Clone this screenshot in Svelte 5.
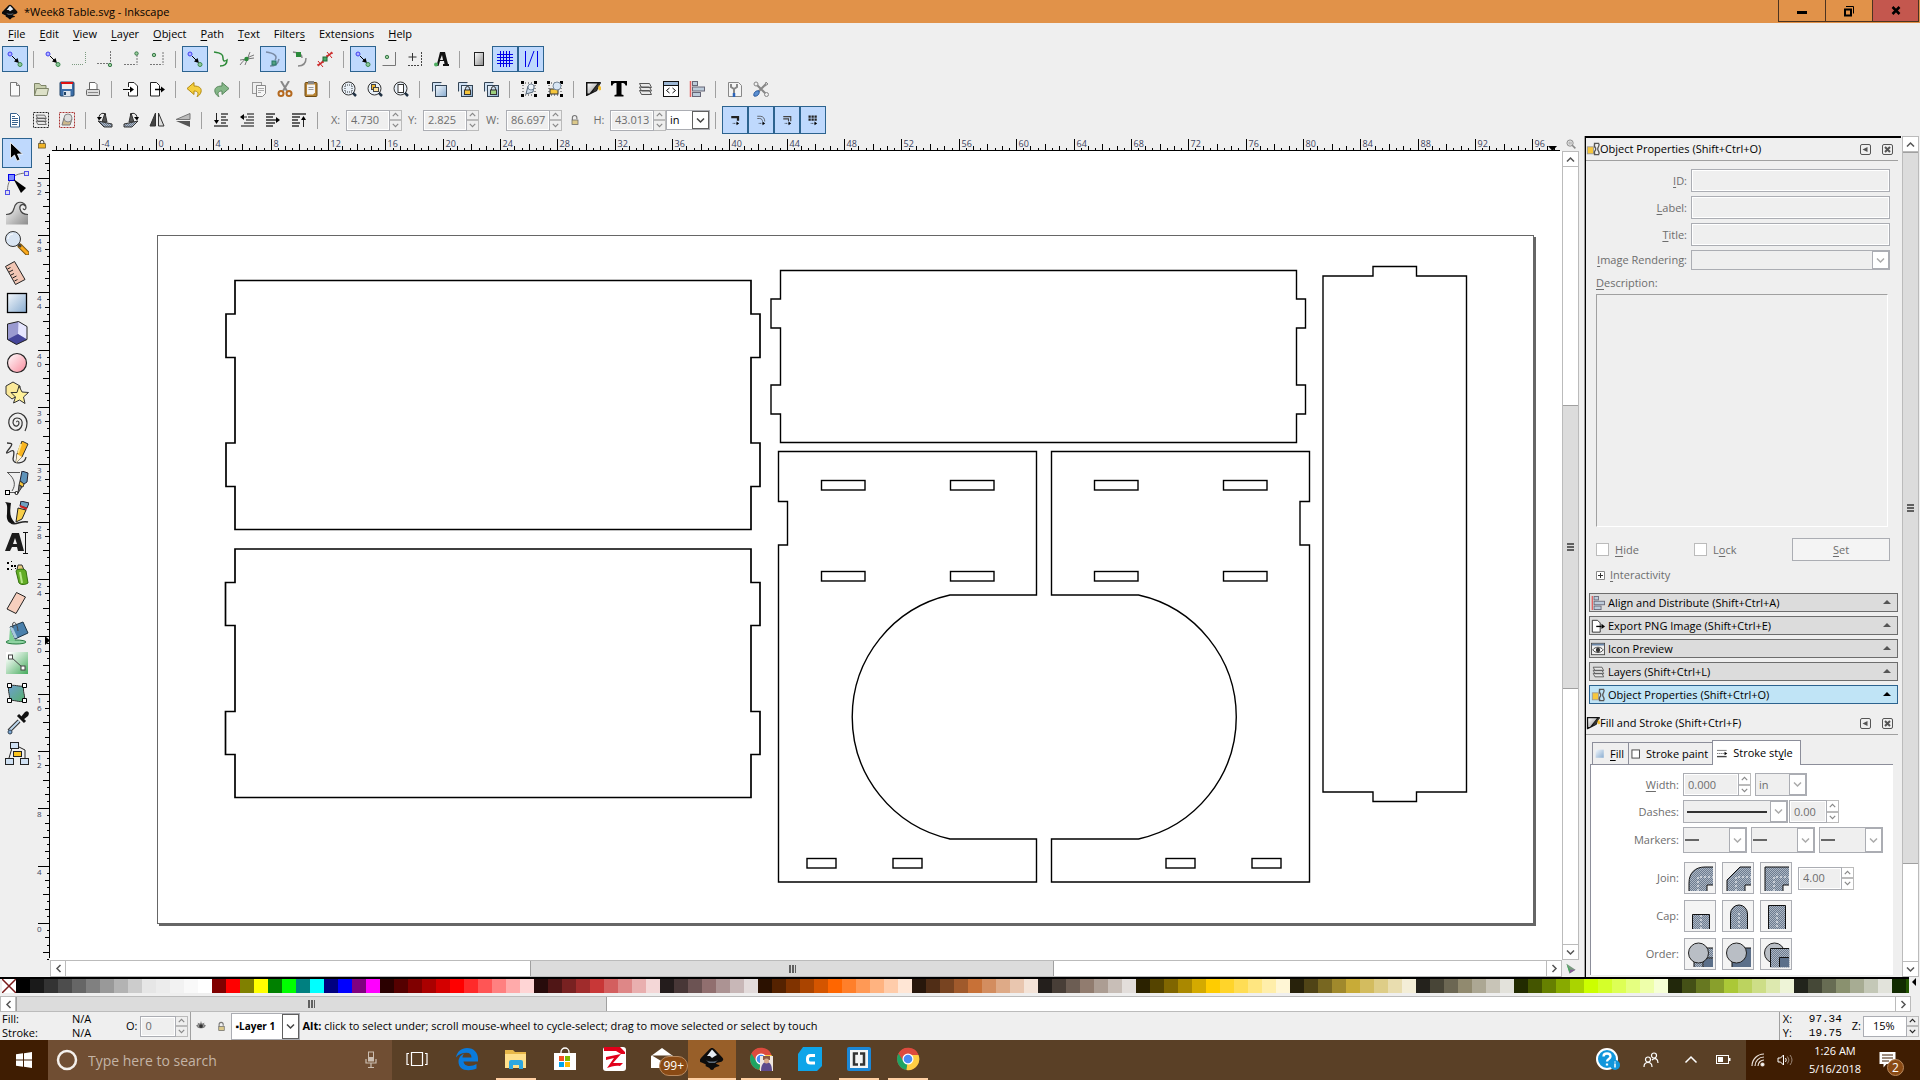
<script lang="ts">
  type Tick = { pos: number; size: number; label: string };

  const UNIT = 14.336;
  const PAGE_LEFT = 107;
  const PAGE_BOTTOM = 772;

  const menus = ['_File', '_Edit', '_View', '_Layer', '_Object', '_Path', '_Text', 'Filter_s', 'Exte_nsions', '_Help'];

  const node = '<circle cx="3" cy="3" r="2" fill="#b0b0ff" stroke="#4040f0"/><path d="M5 5l5 5" stroke="#000"/><path d="M12 12l-5-1.500 3.500-3.500z"/><circle cx="13" cy="13.500" r="2" fill="#8fc79b" stroke="#3a8a4c"/>';
  const dot = (x: number, y: number) => `<circle cx="${x}" cy="${y}" r="1.700" fill="#9c9" stroke="#3a7a4c"/>`;
  const pagePath = '<path d="M3.500 1.500h6l3 3v10.500h-9z" fill="#fafafa" stroke="#777"/><path d="M9.500 1.500v3h3" fill="#ddd" stroke="#777"/>';
  const lens = '<circle cx="7.500" cy="7.500" r="6.500" fill="#e8f0f8" stroke="#333"/><path d="M12 12l3 3" stroke="#234" stroke-width="2.500"/>';
  const padlock = (x: number, y: number, c = '#f6c63c') =>
    `<path d="M${x + 1.5} ${y + 3}v-1.500a2 2 0 0 1 4 0v1.500" fill="none" stroke="#333"/><rect x="${x + 0.5}" y="${y + 3}" width="6" height="4.500" fill="${c}" stroke="#333"/>`;
  const layered = '<path d="M1.500 10.500v-9h9" fill="none" stroke="#345"/><path d="M2 2h8v3h-5v5h-3z" fill="#cfe0f2"/><rect x="4.500" y="4.500" width="11" height="11" fill="url(#blueFill)" stroke="#345"/>';
  const layers = '<path d="M2.500 9.500l2 4h10l-2-4zM2.500 6l2 4h10l-2-4zM2.500 2.500l2 4h10l-2-4z" fill="#e8e8e8" stroke="#555"/>';
  const handles = '<path d="M0 0h3v3h-3zM13 0h3v3h-3zM0 13h3v3h-3zM13 13h3v3h-3z"/><path d="M4 2h8M2 4v8M14 4v8M4 14h8" stroke="#333" stroke-dasharray="1 2"/>';
  const scaleEnd = '<path d="M5 12.500h7" stroke="#000" stroke-dasharray="1 1"/><path d="M10 10l3.500 2.500-3.500 2.500z"/>';

  const icons: Record<string, string> = {
    node,
    bbox: '<path d="M14.500 1v12M1 13.500h12" stroke="#7b9a80" stroke-dasharray="1 1"/>',
    bboxCorner: `<path d="M13.500 0v12M0 12.500h12" stroke="#777" stroke-dasharray="2 1"/>${dot(13, 14)}`,
    bboxEdge: `<path d="M14 4v10M1 13.500h12" stroke="#777" stroke-dasharray="2 1"/>${dot(13.5, 2.5)}`,
    bboxCenter: `<path d="M14 1v13M1 13.500h12" stroke="#777" stroke-dasharray="2 1"/>${dot(5, 4)}`,
    curve: '<path d="M1 1c8 1 9 3 9 6s1 4 4 2c0 4-2 6-7 6" fill="none" stroke="#2c8a38" stroke-width="1.500"/>',
    cross: `<path d="M1 14c3-5 8-8 14-10M6 14l5-13M1 9l14-2" stroke="#777" fill="none"/><circle cx="7.500" cy="8" r="2.200" fill="#2b8a3a"/>`,
    cusp: `<path d="M1 1c8 1 12 4 9 8M14 8c-1 5-4 7-9 7" fill="none" stroke="#7a8ba5" stroke-width="1.500"/><rect x="7" y="10" width="4" height="4" fill="#55a080" stroke="#276"/>`,
    smooth: '<path d="M2 1c8 1 9 3 9 6M15 7c0 5-3 8-8 8" fill="none" stroke="#888" stroke-width="1.500"/><rect x="5" y="1" width="5" height="5" fill="#2b8a3a"/>',
    mid: '<path d="M1 15l14-14" stroke="#c33" stroke-width="1.500"/><path d="M1 10l5 6M0 14l7-3M10 1l5 6M9 5l7-3" stroke="#c22"/><rect x="6" y="6" width="4" height="4" fill="#4a6" stroke="#263"/>',
    snapCenter: `<path d="M14.500 1v13.500h-13" fill="none" stroke="#777"/>${dot(6, 6)}`,
    rotCenter: '<path d="M5.500 2v8M1.500 6h8" stroke="#333"/><path d="M14.500 1v14M1 14.500h12" stroke="#444" stroke-dasharray="2 1"/>',
    textSnap: '<path d="M7 1h5l3 12h1v2h-6v-2h1.500l-.5-3h-4l-1.500 5h-3v-2h1.500zM9 4l-2 5h3z" fill="#111"/><circle cx="3" cy="13.500" r="2" fill="#4caf60"/>',
    page: '<rect x="3.500" y="1.500" width="9" height="13" fill="url(#greyFill)" stroke="#222"/>',
    grid: '<path d="M3.500 0v16M6.500 0v16M9.500 0v16M12.500 0v16M0 3.500h16M0 6.500h16M0 9.500h16M0 12.500h16" stroke="#0000e8"/>',
    guides: '<path d="M2.500 0v16M5 16l6-16M14.500 0v16" stroke="#0000e8" fill="none"/>',
    newDoc: pagePath,
    open: '<path d="M1.500 14.500v-12h5l1.500 2h5v3h-8z" fill="#c8cfae" stroke="#7d8468"/><path d="M1.500 14.500l2-7h12l-1.500 7z" fill="#dde1c8" stroke="#7d8468"/>',
    save: '<rect x="1" y="1" width="14" height="14" rx="1" fill="#3b6ea8" stroke="#224468"/><path d="M2 1h12v2h-12z" fill="#d11"/><rect x="3" y="3" width="10" height="5" fill="#eee"/><rect x="4.500" y="10" width="7" height="5" fill="#dfe6ee"/><path d="M6 11v3" stroke="#246" stroke-width="2"/>',
    print: '<path d="M4.500 8v-6.500h5.500l2 2v4.500" fill="#fff" stroke="#666"/><rect x="1.500" y="8.500" width="13" height="6" rx="1" fill="#ddd" stroke="#666"/><path d="M3 11.500h10" stroke="#888"/>',
    importDoc: '<path d="M5.500 6v-4.500h5.500l3.500 3.500v10h-9v-4" fill="#fff" stroke="#222"/><path d="M0 8.500h7" stroke="#000"/><path d="M7 5.500l4 3-4 3z"/>',
    exportDoc: '<path d="M1.500 1.500h6l3 3v10.500h-9z" fill="#fff" stroke="#222"/><path d="M6 8.500h6" stroke="#000" stroke-width="1.500"/><path d="M12 5.500l4 3-4 3z"/>',
    undo: '<path d="M0 7.500l7-6v3.500c5 0 8 2 7 6-.500 2-2 4-4 4.500 2-3 1-5.500-3-5.500v3.500z" fill="#f5cf3d" stroke="#b38a12"/>',
    redo: '<path d="M16 7.500l-7-6v3.500c-5 0-8 2-7 6 .500 2 2 4 4 4.500-2-3-1-5.500 3-5.500v3.500z" fill="#85b788" stroke="#58865c"/>',
    copy: '<rect x="1.500" y="1.500" width="9" height="11" fill="#eee" stroke="#999"/><path d="M5.500 4.500h9v8l-3 3h-6z" fill="#f6f6f6" stroke="#888"/><path d="M7 7.500h6M7 9.500h6M7 11.500h3" stroke="#aaa"/>',
    cut: '<path d="M4 0l6 10M12 0l-6 10" stroke="#888" stroke-width="2"/><circle cx="4" cy="12.500" r="2.500" fill="none" stroke="#b4691f" stroke-width="2"/><circle cx="12" cy="12.500" r="2.500" fill="none" stroke="#b4691f" stroke-width="2"/>',
    paste: '<rect x="2" y="1.500" width="12" height="14" rx="1" fill="#b78333" stroke="#6e4b14"/><path d="M4 3.500h8v8l-2 2h-6z" fill="#f4f4f4"/><rect x="5" y="0" width="6" height="3" fill="#888"/><path d="M5.500 6.500h5M5.500 8.500h5" stroke="#999"/>',
    zoomSel: `${lens}<rect x="4" y="4" width="7" height="7" fill="none" stroke="#333" stroke-dasharray="1 1"/>`,
    zoomDraw: `${lens}<rect x="4.500" y="3.500" width="4" height="5" fill="#f2b92c" stroke="#444"/><rect x="6.500" y="6.500" width="5" height="4" fill="#ffe39c" stroke="#444"/>`,
    zoomPage: `${lens}<rect x="5" y="3.500" width="5.500" height="8" fill="#fff" stroke="#333"/>`,
    dup: layered,
    clone: `${layered}${padlock(7, 6)}`,
    unlink: `${layered}${padlock(7, 6, '#9ccf7c')}`,
    group: `${handles}<path d="M5 13l2-8h6l-1 6z" fill="#cfdceb" stroke="#567"/><circle cx="10" cy="6" r="3" fill="#eef4fa" stroke="#789"/>`,
    ungroup: `${handles}<rect x="3" y="8" width="8" height="5" fill="#f6c63c" stroke="#333"/><circle cx="10" cy="5" r="4" fill="#d8e6f5" stroke="#789"/>`,
    fillStroke: '<path d="M1 1h15l-4 9-10 5h-1z" fill="#111"/><path d="M2.500 2.500h10l-8 10h-2z" fill="url(#greyFill)"/><path d="M16 2l-5 8-3 1 1-3 5-6z" fill="#333"/><path d="M14 4l2 2v3l-2 .5-1-2.500z" fill="#f6c030"/>',
    text: '<path d="M0 0h16v4.500h-1.500c-.500-2-1.500-2.500-4-2.500v11.500l2 .5v1.500h-9v-1.500l2-.5v-11.500c-2.500 0-3.500.5-4 2.500h-1.500z"/>',
    layers,
    xml: '<rect x=".5" y=".5" width="15" height="15" fill="#fff" stroke="#111"/><path d="M1 1h14v3h-14z" fill="#9cb6d3"/><path d="M1 4.500h14" stroke="#111"/><path d="M6.500 7l-3 2.500 3 2.500M9.500 7l3 2.500-3 2.500" fill="none" stroke="#111"/>',
    align: '<path d="M1.500 0v16" stroke="#e06060" stroke-width="1.500"/><rect x="3.500" y=".5" width="5" height="4" fill="#bccbda" stroke="#667"/><rect x="3.500" y="6" width="12" height="4" fill="#bccbda" stroke="#667"/><rect x="3.500" y="11.500" width="8" height="4" fill="#bccbda" stroke="#667"/>',
    docPrefs: '<path d="M1.500 1.500h10l3 3v11h-13z" fill="#f4f4f4" stroke="#888"/><path d="M4 3v3l3 2v7M10 3v3l-3 2" fill="none" stroke="#888" stroke-width="2"/><path d="M7 12v4" stroke="#2b63b8" stroke-width="2.500"/>',
    prefs: '<path d="M2 2l12 12M14 2l-12 12" stroke="#888" stroke-width="2"/><circle cx="3" cy="3" r="2" fill="#f0f0f0" stroke="#888"/><path d="M13 1l2 2-3 2z" fill="#ddd" stroke="#888"/><path d="M1 15c-1-3 2-6 5-5 1 3-2 6-5 5z" fill="#5b8fd0" stroke="#2b5ca0"/><circle cx="13.500" cy="13.500" r="2" fill="#eee" stroke="#888"/>',
    selAll: '<path d="M3.500 1.500h6l3 3v10.500h-9z" fill="#fff" stroke="#36608c"/><path d="M5 6.500h6M5 8.500h6M5 10.500h6M5 12.500h5M5 4.500h3" stroke="#36608c"/>',
    selLayers: `<rect x=".5" y=".5" width="15" height="15" fill="none" stroke="#222" stroke-dasharray="2 1"/><g transform="translate(1 1) scale(.85)">${layers}</g>`,
    deselect: '<rect x=".5" y=".5" width="15" height="15" fill="none" stroke="#a33" stroke-dasharray="2 1"/><path d="M3 13l2-7 8 1-2 6z" fill="#cdb98c" stroke="#777"/><circle cx="9" cy="6" r="4" fill="#ddd" stroke="#888"/>',
    rotL: '<path d="M8 1l2 9h-5z" fill="#555" stroke="#333"/><path d="M1 9l14 3v3h-8z" fill="url(#checker)" stroke="#333"/><path d="M2 6c0-5 5-6 7-3" fill="none" stroke="#222"/><path d="M0 5h5l-3 3.500z"/>',
    rotR: '<path d="M8 1l-2 9h5z" fill="#555" stroke="#333"/><path d="M15 9l-14 3v3h8z" fill="url(#checker)" stroke="#333"/><path d="M14 6c0-5-5-6-7-3" fill="none" stroke="#222"/><path d="M16 5h-5l3 3.500z"/>',
    flipH: '<path d="M6.500 1v13h-5.500z" fill="#444" stroke="#333"/><path d="M9.500 1v13h5.500z" fill="#ddd" stroke="#333"/>',
    flipV: '<path d="M1 7.500h14v-6z" fill="#bbb" stroke="#777"/><path d="M1 9h14v6z" fill="#555"/>',
    toBottom: '<path d="M3.500 1v9" stroke="#222"/><path d="M1 8h5l-2.500 4z"/><path d="M8 2h7M8 5h5M8 8h7M8 11h5M1 14h14" stroke="#444" stroke-width="1.500"/>',
    lower: '<path d="M1 5l4-3v6z"/><path d="M4 5h4" stroke="#222"/><path d="M8 2h7M9 5h6M7 8h8M5 11h10M2 14h13" stroke="#555" stroke-width="1.500"/>',
    raise: '<path d="M1 2h9M1 5h7M1 8h10M1 11h9M1 14h7" stroke="#333" stroke-width="1.500"/><path d="M11 5l4 3-4 3z"/>',
    toTop: '<path d="M1 2h14M1 5h8M1 8h6M1 11h8M1 14h7" stroke="#333" stroke-width="1.500"/><path d="M12.500 7v8" stroke="#222"/><path d="M10 8h5l-2.500-4z"/>',
    scaleStroke: `<path d="M3 4h9v5" fill="none" stroke="#222" stroke-width="3"/>${scaleEnd}`,
    scaleCorner: `<path d="M3 3h4c4 0 6 3 6 7M3 6h3c3 0 4 2 4 4" fill="none" stroke="#444"/>${scaleEnd}`,
    scaleGrad: `<path d="M3 3.500h10v6M3 6.500h7v3" fill="none" stroke="#444" stroke-width="1.500"/>${scaleEnd}`,
    scalePattern: `<path d="M2 3.500h12M2 7.500h12" stroke="#222" stroke-width="3" stroke-dasharray="3 1"/>${scaleEnd}`,
    objProps: '<rect x="1.500" y="5.500" width="7" height="8" fill="#f6c63c" stroke="#999"/><path d="M9 1.500h6M9 14.500h6M10 2c-1 2-1 3 1 5v2c-2 2-2 3-1 5M15 2c0 2 0 3-1.500 5v2c1.500 2 1.500 3 1.500 5" fill="none" stroke="#555" stroke-width="1.500"/>',
    iconPreview: '<rect x=".5" y="1.500" width="15" height="13" fill="#eee" stroke="#444"/><path d="M1 2h14v2h-14z" fill="#6b87a8"/><path d="M2 9c3-4 9-4 12 0-3 4-9 4-12 0z" fill="#fff" stroke="#333"/><circle cx="8" cy="9" r="2.500" fill="#333"/>',
    eye: '<path d="M1 8c3-5 11-5 14 0-3 4-11 4-14 0z" fill="#999" stroke="#444"/><circle cx="8" cy="8" r="3" fill="#333"/><path d="M3 3l1.500 2M8 1v3M13 3l-1.500 2" stroke="#444"/>',
    unlock: '<path d="M4.500 8v-3a3 3 0 0 1 6 0v2" fill="none" stroke="#777" stroke-width="1.500"/><rect x="4" y="8" width="8" height="6" fill="#dcc98b" stroke="#666"/>',
    lock: '<path d="M5 8v-3a3 3 0 0 1 6 0v3" fill="none" stroke="#333" stroke-width="1.500"/><rect x="2.500" y="7.500" width="11" height="7" fill="#f0b429" stroke="#4a3a10"/>',
    zoom: '<circle cx="6.500" cy="6.500" r="5" fill="#eee" stroke="#888" stroke-width="1.500"/><path d="M5 4v5M8 4v5" stroke="#666"/><path d="M10 10l5 5" stroke="#888" stroke-width="2.500"/>',
    colorManage: '<path d="M2 1l12 8-8 5z" fill="#7a9a80"/><path d="M2 1l5 8-1 5z" fill="#4aa860"/><path d="M7 9h7l-8 5z" fill="#8a5a98"/>',
    solid: '<rect x="1" y="1" width="13" height="13" fill="url(#blueFill)"/>',
    outline: '<rect x="1.500" y="1.500" width="12" height="13" fill="#fff" stroke="#444" stroke-width="1.500"/>',
    strokeLines: '<path d="M0 3.500h14" stroke="#444"/><path d="M0 8h11" stroke="#444" stroke-dasharray="2 1"/><path d="M11 5.500l4 2.500-4 2.500z"/><path d="M0 12.500h14" stroke="#444" stroke-width="2"/>'
  };

  const toolIcons: [string, string][] = [
    ['Select', '<path d="M5.500 1.500v16l4-3.500 2.500 6 3-1.300-2.500-5.700h5z" stroke="#fff" stroke-width=".8"/>'],
    ['Edit paths by nodes', '<path d="M2.500 20c0-10 4-17 18-18" fill="none" stroke="#777"/><rect x="3.500" y="3.500" width="6" height="6" fill="#7d8cff" stroke="#0000e8"/><rect x="19.500" y=".5" width="4" height="4" fill="#dde" stroke="#5050e8"/><rect x=".5" y="19.500" width="4" height="4" fill="#dde" stroke="#5050e8"/><path d="M8.500 8l12.500 9-5 5z"/>'],
    ['Tweak', '<path d="M1 13.500c5 0 7-2 8-6 1-5 4-7 8-6 3 1 4 3 4 5 0 1-1 1-1 0-1-3-5-2-5 1s3 6 8 6v10h-22z" fill="url(#greyFill)"/><path d="M1 13.500c5 0 7-2 8-6 1-5 4-7 8-6 3 1 4 3 4 5 0 2-2 3-3 1M20 5c-2-3-6-1-5 3 1 4 4 5.500 8 5.500" fill="none" stroke="#444" stroke-width="1.200"/>'],
    ['Zoom', '<path d="M15 15l7 7" stroke="#7a5510" stroke-width="5" stroke-linecap="round"/><path d="M16 16l6 6" stroke="#fba91c" stroke-width="3" stroke-linecap="round"/><path d="M13 13l3 3" stroke="#444" stroke-width="2"/><circle cx="8" cy="8" r="7.500" fill="#d9e5f3" stroke="#333"/><path d="M3 8a5 5 0 0 1 5-5" fill="none" stroke="#fff"/>'],
    ['Measure', '<path d="M.5 5.500l9-5 10.500 18-9.500 5z" fill="#f2c6b4" stroke="#222"/><path d="M2.500 8l3-1.500M4 11l4-2M6 14l3-1.500M7.500 17l4-2M9.500 20l3-1.500" stroke="#222"/>'],
    ['Rectangle', '<rect x="2.500" y="2.500" width="19" height="19" fill="url(#blueFill)" stroke="#000" stroke-width="1.300"/>'],
    ['3D box', '<path d="M2.500 3l11-2.500 8.500 5v13l-10.500 5-9-5z" fill="#9a9ad0"/><path d="M13.500.5l8.500 5v13l-9-5.500z" fill="#e6e6ff"/><path d="M13 13l9 5.500-10.500 5-9-5z" fill="#45459a"/><path d="M2.500 3l11-2.500 8.500 5v13l-10.500 5-9-5z" fill="none" stroke="#222"/>'],
    ['Circle', '<circle cx="12" cy="12" r="9.500" fill="url(#pinkFill)" stroke="#222" stroke-width="1.200"/>'],
    ['Star', '<path d="M1 5l7-4 7 4v8l-8 5-6-5z" fill="#fbe99a" stroke="#333"/><path d="M14 5l3 6 6.500.500-5 4.500 1.500 6.500-5.500-3.500-6 3 2-6-4.500-4.500h6z" fill="#fff19a" stroke="#333"/>'],
    ['Spiral', '<path d="M12 11c-1-1 2-2 2 1s-3 4-5 2-1-7 3-7 6 3 5 7-4 6-8 5-6-6-5-10 5-7 9-7 9 4 9 10c0 4-1 6-2 8" fill="none" stroke="#333" stroke-width="1.200"/>'],
    ['Pencil', '<path d="M2 2c6 0 6 1 2 6s-3 5 2 2c4-2 3 3 2 8 0 6 12 5 13-2" fill="none" stroke="#333" stroke-width="1.300"/><path d="M17 0l6 3-6 13-6 6 1-9z" fill="#f9b520" stroke="#333"/><path d="M12 13l5 3-6 6z" fill="#fff3d0"/><path d="M16 3l-3 9" stroke="#ffe48a" stroke-width="2"/>'],
    ['Pen', '<path d="M2 1.500h13M3 2c7 6 8 12 4 18M4 21.500h8" fill="none" stroke="#555"/><path d="M17 0l6 2-1 9-3 2-4-3z" fill="#5e93bb" stroke="#223"/><path d="M15 10l4 3-1 3-4-2z" fill="#f6c63c" stroke="#333"/><path d="M14 14l3 2-4 6z" fill="#777" stroke="#333"/><rect x=".5" y="19.500" width="4" height="4" fill="#fff" stroke="#000"/><circle cx="11.500" cy="22" r="1.500" fill="#fff" stroke="#000"/>'],
    ['Calligraphy', '<path d="M0 1l6 1c-1 8-2 14 4 20-6 2-9-3-8-9 0-6 1-9-2-12z" fill="#111"/><path d="M6 22c5 3 10-3 17-1" fill="none" stroke="#222" stroke-width="1.500"/><path d="M16 0l8 2-2 5-7-2z" fill="#6fa0c0" stroke="#223"/><path d="M15 5l7 3" stroke="#c22" stroke-width="2"/><path d="M13 7l8 2-4 9-6 3z" fill="#f7cf4a" stroke="#222"/>'],
    ['Text', '<path d="M7 2h7l5 18h-6l-1-4h-5l-2 4h-5zM10 7l-2 6h4z" fill="#1c1c1c"/><path d="M18 1.500h5M18 22.500h5M20.500 2v20" stroke="#111"/>'],
    ['Spray', '<path d="M2 1h2v2h-2zM6 4h2v2h-2zM2 7h2v2h-2zM9 4h2v2h-2zM6 0h1v1h-1zM6 8h1v1h-1zM10 7h1v1h-1z"/><path d="M12 9l1-5h4l2 5z" fill="#e6cb80" stroke="#333"/><path d="M11 10c0-2 9-3 10 0l2 12c-3 2-7 2-9 0z" fill="#62ad25" stroke="#33700e"/><path d="M15 11l2 11" stroke="#b8e88a" stroke-width="2"/>'],
    ['Eraser', '<path d="M11.500 1.500l9 4.500-9.500 16.500-9-4.500z" fill="#f7cfbe" stroke="#222"/>'],
    ['Paint bucket', '<ellipse cx="11" cy="21" rx="10" ry="2" fill="#8fd3a2" stroke="#267a40"/><path d="M5 7l-1 13h6z" fill="#7fcf95"/><path d="M5 6l13-5 5 11-13 6z" fill="#4a80ac" stroke="#1c3446"/><path d="M6 6l5 11" stroke="#a8c8dd" stroke-width="3"/><path d="M8 7c-2-8 4-8 5 3" fill="none" stroke="#444"/>'],
    ['Gradient', '<rect x="1" y="1" width="22" height="22" fill="url(#greenFill)"/><path d="M6 6l12 11" stroke="#444"/><rect x="3.500" y="4" width="4" height="4" fill="#fff" stroke="#444"/><rect x="16" y="15" width="4" height="4" fill="#fff" stroke="#444"/>'],
    ['Mesh', '<path d="M4 5c5-2 10 1 15 0-2 6 2 9 0 15-5 2-10-2-15 0 2-5-2-10 0-15z" fill="url(#tealFill)" stroke="#333"/><path d="M2.500 2.500h4v4h-4zM17.500 2.500h4v4h-4zM2.500 17.500h4v4h-4zM17.500 17.500h4v4h-4z" fill="#fff" stroke="#000"/>'],
    ['Dropper', '<path d="M14 10l-10 10" stroke="#333" stroke-width="4"/><path d="M14 10l-10 10" stroke="#bed8ee" stroke-width="2"/><path d="M13 4l7 7" stroke="#111" stroke-width="3"/><path d="M15 7l5-6c3-2 5 1 3 4l-5 4z" fill="#111"/><circle cx="5" cy="21" r="2" fill="#7ba7d4" stroke="#345"/>'],
    ['Connector', '<path d="M7 7l-3 10M12 5l8 4v9" fill="none" stroke="#222"/><rect x="5.500" y="1.500" width="8" height="6" fill="#cfe0f2" stroke="#222"/><rect x="8.500" y="10.500" width="8" height="5" fill="#fbc41e" stroke="#222"/><rect x=".5" y="17.500" width="8" height="6" fill="#cfe0f2" stroke="#222"/><rect x="15.500" y="17.500" width="8" height="6" fill="#cfe0f2" stroke="#222"/>']
  ];

  // "*" in front of a name marks a pressed toggle, "|" is a separator
  const snapBar = '*node | node bbox bboxCorner bboxEdge bboxCenter | *node curve cross *cusp smooth mid | *node snapCenter rotCenter textSnap | page *grid *guides'.split(' ');
  const commandBar = 'newDoc open save print | importDoc exportDoc | undo redo | copy cut paste | zoomSel zoomDraw zoomPage | dup clone unlink | group ungroup | fillStroke text layers xml align | docPrefs prefs'.split(' ');
  const selectBar = 'selAll selLayers deselect | rotL rotR flipH flipV | toBottom lower raise toTop |'.split(' ');
  const scaleBar = ['*scaleStroke', '*scaleCorner', '*scaleGrad', '*scalePattern'];

  const swatches = (
    '000000 1a1a1a 333333 4d4d4d 666666 808080 999999 b3b3b3 cccccc e6e6e6 ececec f2f2f2 f9f9f9 ffffff ' +
    '800000 ff0000 808000 ffff00 008000 00ff00 008080 00ffff 000080 0000ff 800080 ff00ff ' +
    '2b0000 550000 800000 aa0000 d40000 ff0000 ff2a2a ff5555 ff8080 ffaaaa ffd5d5 ' +
    '280b0b 501616 782121 a02c2c c83737 d35f5f de8787 e9afaf f4d7d7 ' +
    '241c1c 483737 6c5353 916f6f ac9393 c8b7b7 e3dbdb ' +
    '2b1100 552200 803300 aa4400 d45500 ff6600 ff7f2a ff9955 ffb380 ffccaa ffe6d5 ' +
    '28170b 502d16 784421 a05a2c c87137 d38d5f deaa87 e9c6af f4e3d7 ' +
    '241f1c 483e37 6c5d53 917c6f ac9d93 c8beb7 e3dedb ' +
    '2b2200 554400 806600 aa8800 d4aa00 ffcc00 ffd42a ffdd55 ffe680 ffeeaa fff6d5 ' +
    '28220b 504416 786721 a0892c c8ab37 d3bc5f decd87 e9ddaf f4eed7 ' +
    '24221c 484537 6c6753 918a6f aca793 c8c4b7 e3e2db ' +
    '222b00 445500 668000 88aa00 aad400 ccff00 d4ff2a ddff55 e5ff80 eeffaa f6ffd5 ' +
    '22280b 445016 677821 89a02c abc837 bcd35f cdde87 dde9af eef4d7 ' +
    '22241c 454837 676c53 8a916f a7ac93 c4c8b7 e2e3db 112b00 225500'
  ).split(' ');

  const dialogs = [
    { icon: 'align', title: 'Align and Distribute (Shift+Ctrl+A)' },
    { icon: 'exportDoc', title: 'Export PNG Image (Shift+Ctrl+E)' },
    { icon: 'iconPreview', title: 'Icon Preview' },
    { icon: 'layers', title: 'Layers (Shift+Ctrl+L)' },
    { icon: 'objProps', title: 'Object Properties (Shift+Ctrl+O)' }
  ];

  const strokeButtons = {
    Join: [
      '<path d="M4 28v-8c0-10 6-16 16-16h8v18h-6v6z" fill="url(#checker)"/><path d="M4 28v-8c0-10 6-16 16-16h8M28 22h-6v6" fill="none" stroke="#111"/><path d="M13 28v-14h15" fill="none" stroke="#fff" stroke-dasharray="2 2"/>',
      '<path d="M4 28v-11l13-13h11v18h-6v6z" fill="url(#checker)"/><path d="M4 28v-11l13-13h11M28 22h-6v6" fill="none" stroke="#111"/><path d="M13 28v-14h15" fill="none" stroke="#fff" stroke-dasharray="2 2"/>',
      '<path d="M4 28v-24h24v18h-6v6z" fill="url(#checker)"/><path d="M4 28v-24h24M28 22h-6v6" fill="none" stroke="#111"/><path d="M13 28v-14h15" fill="none" stroke="#fff" stroke-dasharray="2 2"/>'
    ],
    Cap: [
      '<path d="M7.500 28v-14.500h17v14.500" fill="url(#checker)" stroke="#111"/><path d="M16 14v14" stroke="#fff" stroke-dasharray="2 2"/>',
      '<path d="M7.500 28v-15a8.500 9 0 0 1 17 0v15" fill="url(#checker)" stroke="#111"/><path d="M16 12v16" stroke="#fff" stroke-dasharray="2 2"/>',
      '<path d="M7.500 28v-23.500h17v23.500" fill="url(#checker)" stroke="#111"/><path d="M16 12v16" stroke="#fff" stroke-dasharray="2 2"/>'
    ],
    Order: [
      '<rect x="9" y="9" width="19" height="19" fill="url(#checker)"/><path d="M9 28v-8M28 9h-8M18 28v-9h10" fill="none" stroke="#111"/><rect x="19" y="20" width="9" height="8" fill="#5c708a"/><circle cx="13.500" cy="14" r="10" fill="#b9bec5" stroke="#222"/>',
      '<rect x="9" y="9" width="19" height="19" fill="#5c708a"/><path d="M9 9h19M9 28v-8" stroke="#111"/><circle cx="13.500" cy="14" r="10" fill="#b9bec5" stroke="#222"/>',
      '<circle cx="13.500" cy="14" r="10" fill="#b9bec5" stroke="#222"/><rect x="9.500" y="9.500" width="19" height="19" fill="url(#checker)"/><path d="M9.500 28v-18.500h18.500M18.500 28v-9.500h9.500" fill="none" stroke="#111"/><rect x="19" y="19" width="9" height="9" fill="#5c708a"/>'
    ]
  };

  const chrome = '<circle cx="12" cy="12" r="11" fill="#dd4b3e"/><path d="M12 12l-9.500-5.500a11 11 0 0 0 8 16.400z" fill="#1fa463"/><path d="M12 12l-1.500 11a11 11 0 0 0 12-15h-10z" fill="#ffce44"/><path d="M2.500 6.500a11 11 0 0 1 20 1.500h-10.500l-4.500 6.500z" fill="#dd4b3e"/><circle cx="12" cy="12" r="5.500" fill="#fff"/><circle cx="12" cy="12" r="4.300" fill="#4a8af4"/>';
  const inkscapeLogo = '<path d="M12 1c1 0 2 .6 2.800 1.500l7.500 8c2 2.300.5 4-2 4.500l-4 1c-1 .5 1 1.500 2.500 2s0 1.800-2 1.700l-2.500 1.300c-.500 1-1 2-2.300 2s-2-1-2.500-2l-3-1.500c-2-.500 0-1.500-1-2.300l-3.800-1.700c-2.500-.800-2.500-2.500-.5-4.800l8-8.200c.800-.9 1.800-1.500 2.800-1.500z" fill="#0c0c0c"/><path d="M12 2.500l5 5.500-2 1-3 2-2-2-3 0z" fill="#e4ebf2"/><path d="M6 13c3 2 9 2 12 0l-3 3h-6z" fill="#5c6b7a"/>';

  const apps = [
    { name: 'Task View', art: '<path d="M5.500 5.500h11v13h-11zM3 6.500h-2v11h2M19 6.500h2v11h-2" fill="none" stroke="#fff" stroke-width="1.200"/>' },
    { name: 'Edge', art: '<path d="M1 10.500c1-6 5.500-9.500 11-9.500 7 0 11 5 11 10.500v3h-14.500c.3 3 3 4.500 6 4.500 2.500 0 5-.700 7-2v4.500c-2.500 1.300-5 1.700-8 1.700-6.500 0-10-3.500-10-8.500 0-4 2.500-7 6-8.500-1.500 1.500-2 3-2 4.300h9c0-3-1.700-4.700-5-4.700-4.500 0-8 1.500-10.500 4.700z" fill="#0a7bdc"/>' },
    { name: 'File Explorer', open: true, art: '<path d="M1 3h8l2 2h11v16h-21z" fill="#e8b84a"/><path d="M1 7h21v14h-21z" fill="#ffe08c"/><path d="M5 22v-7a2 2 0 0 1 2-2h10a2 2 0 0 1 2 2v7h-4v-4h-6v4z" fill="#2da7e0"/>' },
    { name: 'Store', art: '<path d="M8 8v-3a4 4 0 0 1 8 0v3" fill="none" stroke="#fff" stroke-width="1.300"/><path d="M1 6h22v17h-22z" fill="#fff"/><path d="M6 9h5v5h-5z" fill="#f25022"/><path d="M12 9h5v5h-5z" fill="#7fba00"/><path d="M6 15h5v5h-5z" fill="#00a4ef"/><path d="M12 15h5v5h-5z" fill="#ffb900"/>' },
    { name: 'PDF viewer', art: '<rect x="1" y="0" width="23" height="24" rx="3" fill="#fff"/><path d="M2 0h16l5 5v2h-4l-5-3h-12z" fill="#e2001a"/><path d="M4 10l15-3-8 9h10l-3 3c-5-1-9 1-13 2l7-10-8 2z" fill="#e2001a"/>' },
    { name: 'Mail', badge: '99+', art: '<path d="M0 9l11-8 11 8v12h-22z" fill="#fff"/><path d="M1 8.500h20l-10 6z" fill="#5b4026"/>' },
    { name: 'Inkscape', open: true, active: true, art: inkscapeLogo },
    { name: 'Chrome profile', open: true, art: `${chrome}<rect x="11" y="9" width="13" height="15" fill="#efe6df"/><path d="M14 9h7v4h-7z" fill="#8a5a44"/><path d="M12 24c0-6 2-9 5.500-9s5.500 3 5.500 9z" fill="#5c4a8c"/><circle cx="17.500" cy="14" r="2.500" fill="#d9a98a"/>` },
    { name: 'Cura', art: '<path d="M5 0h19v19l-5 5h-19v-17z" fill="#0ea5e9"/><path d="M17 8.500h-4.500c-2 0-3 1.200-3 3v1.500c0 1.800 1 3 3 3h4.500" fill="none" stroke="#fff" stroke-width="3"/>' },
    { name: 'Brackets', open: true, art: '<rect x="0" y="0" width="24" height="24" rx="2" fill="#1b87d6"/><rect x="3" y="3" width="18" height="18" fill="#f4f4f4"/><path d="M11 6.500h-4v11h4M13 6.500h4v11h-4" fill="none" stroke="#333" stroke-width="2.500"/>' },
    { name: 'Chrome', open: true, art: chrome }
  ];

  // cut parts laid out on the sheet, in canvas coordinates
  const heavyParts = [
    'M185 129.500H701V163H710V206.500H701V292H710V335.500H701V378.500H185V335.500H176V292H185V206.500H176V163H185Z',
    'M185 398H701V431.500H710V474.500H701V560.500H710V603.500H701V646.500H185V603.500H175.500V560.500H185V474.500H175.500V431.500H185Z'
  ];
  const parts = [
    'M730.500 119.500H1246.500V148H1255.500V177H1246.500V234H1255.500V263H1246.500V291.500H730.500V263H721V234H730.500V177H721V148H730.500Z',
    'M1273 125H1323V115.500H1366.500V125H1416.500V641H1366.500V650.500H1323V641H1273Z',
    'M728.500 300.500H986.500V444H900A125 125 0 0 0 900 688H986.500V731H728.500V394H737.500V350.500H728.500Z',
    'M1001.500 300.500H1259.500V350.500H1250V394H1259.500V731H1001.500V688H1088.500A125 125 0 0 0 1088.500 444H1001.500Z'
  ];
  const slots = [
    ...[771.5, 900.5, 1044.5, 1173.5].flatMap((x) => [[x, 329.5, 43.5], [x, 420.5, 43.5]]),
    ...[757, 843, 1116, 1202].map((x) => [x, 707.5, 29])
  ];

  function ticks(from: number, to: number, place: (unit: number) => number): Tick[] {
    const list: Tick[] = [];
    for (let unit = from; unit <= to; unit += 0.5) {
      const major = unit % 4 === 0;
      list.push({
        pos: Math.round(place(unit)) + 0.5,
        size: major ? 11 : unit % 2 === 0 ? 6 : unit % 1 === 0 ? 4 : 2,
        label: major ? String(unit) : ''
      });
    }
    return list;
  }

  const topTicks = ticks(-7, 97.5, (unit) => PAGE_LEFT + unit * UNIT - 1);
  const sideTicks = ticks(-2.5, 53.5, (unit) => PAGE_BOTTOM - unit * UNIT);

  let hide = $state(false);
  let lockObject = $state(false);
  let zoom = $state('15%');
</script>

{#snippet icon(name: string, size = 16)}
  <svg width={size} height={size} viewBox="0 0 16 16" aria-hidden="true">{@html icons[name]}</svg>
{/snippet}

{#snippet mnemonic(text: string)}
  {@const at = text.indexOf('_')}
  {text.slice(0, at)}<u>{text[at + 1]}</u>{text.slice(at + 2)}
{/snippet}

{#snippet toolButtons(names: string[], size = 16)}
  {#each names as name}
    {#if name === '|'}
      <span class="sep"></span>
    {:else}
      <button class="tb" class:pressed={name[0] === '*'} aria-label={name.replace('*', '')}>
        {@render icon(name.replace('*', ''), size)}
      </button>
    {/if}
  {/each}
{/snippet}

{#snippet chevron(dir: string, size = 9)}
  <svg class="chev {dir}" width={size} height={size} viewBox="0 0 9 9" aria-hidden="true">
    <path d="M1 6.500L4.500 3L8 6.500" fill="none" stroke="currentColor" stroke-width="1.500" />
  </svg>
{/snippet}

{#snippet spin(id: string, value: string, width: string)}
  <span class="spin {width}">
    <input {id} {value} disabled />
    <span class="steps">
      <button disabled aria-label="Increase {id}">{@render chevron('up', 7)}</button>
      <button disabled aria-label="Decrease {id}">{@render chevron('down', 7)}</button>
    </span>
  </span>
{/snippet}

{#snippet combo(id: string, label: string, value: string, width: string, disabled: boolean)}
  <span class="combo {width}" class:off={disabled}>
    <select {id} aria-label={label} {disabled}><option>{value}</option></select>
    <span class="drop">{@render chevron('down')}</span>
  </span>
{/snippet}

{#snippet dockTitle(name: string, title: string)}
  <div class="dock-title">
    {@render icon(name, 14)}
    <h2>{title}</h2>
    <button aria-label="Iconify {title}"><svg width="11" height="11" viewBox="0 0 11 11"><rect x=".5" y=".5" width="10" height="10" rx="1.500" fill="none" stroke="#555" /><path d="M7.500 3v5l-5-2.500z" fill="#555" /></svg></button>
    <button aria-label="Close {title}"><svg width="11" height="11" viewBox="0 0 11 11"><rect x=".5" y=".5" width="10" height="10" rx="1.500" fill="none" stroke="#555" /><path d="M3 3l5 5M8 3l-5 5" stroke="#555" stroke-width="2" /></svg></button>
  </div>
{/snippet}

<svg class="defs" width="0" height="0" aria-hidden="true">
  <defs>
    <linearGradient id="blueFill" x2="1" y2="1"><stop stop-color="#f4f8fc" /><stop offset="1" stop-color="#87abd0" /></linearGradient>
    <linearGradient id="greyFill" x2="1" y2="1"><stop stop-color="#fff" /><stop offset="1" stop-color="#8c8c8c" /></linearGradient>
    <linearGradient id="pinkFill" x2="1" y2="1"><stop stop-color="#fff" /><stop offset="1" stop-color="#f98a9c" /></linearGradient>
    <linearGradient id="greenFill" x2="1" y2="1"><stop offset=".1" stop-color="#fff" /><stop offset="1" stop-color="#45ab5c" /></linearGradient>
    <linearGradient id="tealFill" x2="1" y2="1"><stop stop-color="#6d9fd0" /><stop offset="1" stop-color="#58b06c" /></linearGradient>
    <pattern id="checker" width="2" height="2" patternUnits="userSpaceOnUse">
      <rect width="2" height="2" fill="#6d7b8f" />
      <path d="M0 0h1v1h-1zM1 1h1v1h-1z" fill="#acb7c4" />
    </pattern>
  </defs>
</svg>

<div class="screen">
  <header class="titlebar">
    <svg width="16" height="16" viewBox="0 0 24 24" aria-hidden="true">{@html inkscapeLogo}</svg>
    <h1>*Week8 Table.svg - Inkscape</h1>
    <div class="window-buttons">
      <button aria-label="Minimize"><svg width="12" height="12" viewBox="0 0 12 12"><path d="M1 6h10v3h-10z" /></svg></button>
      <button aria-label="Restore"><svg width="12" height="12" viewBox="0 0 12 12"><path d="M2 4.500h6v6h-6z" fill="none" stroke="#000" stroke-width="2" /><path d="M3 1.500h7.500v7" fill="none" stroke="#000" /></svg></button>
      <button class="close" aria-label="Close"><svg width="12" height="12" viewBox="0 0 12 12"><path d="M2.500 2l7 7M9.500 2l-7 7" stroke="#000" stroke-width="2.500" /></svg></button>
    </div>
  </header>

  <nav class="menubar">
    {#each menus as menu}
      <button>{@render mnemonic(menu)}</button>
    {/each}
  </nav>

  <div class="toolbar">{@render toolButtons(snapBar)}</div>
  <div class="toolbar commands">{@render toolButtons(commandBar)}</div>
  <div class="toolbar controls">
    {@render toolButtons(selectBar)}
    <div class="fields">
      <label for="x">X:</label>{@render spin('x', '4.730', 'w56')}
      <label for="y">Y:</label>{@render spin('y', '2.825', 'w56')}
      <label for="w">W:</label>{@render spin('w', '86.697', 'w56')}
      <button class="tb" aria-label="Lock ratio">{@render icon('unlock', 12)}</button>
      <label for="h">H:</label>{@render spin('h', '43.013', 'w56')}
    </div>
    {@render combo('unit', 'Unit', 'in', 'w44', false)}
    <span class="sep"></span>
    {@render toolButtons(scaleBar, 12)}
  </div>

  <main>
    <div class="toolbox">
      {#each toolIcons as [name, art], i}
        <button class:pressed={i === 0} aria-label={name}>
          <svg width="24" height="24" viewBox="0 0 24 24" aria-hidden="true">{@html art}</svg>
        </button>
      {/each}
    </div>

    <div class="editor">
      <span class="corner">{@render icon('lock', 10)}</span>
      <svg class="ruler top" aria-hidden="true">
        <path d="M2 14.500H1510" stroke="#000" />
        {#each topTicks as tick}
          <path d="M{tick.pos} 14v-{tick.size}" stroke="#000" />
          {#if tick.label}<text x={tick.pos + 2} y="11">{tick.label}</text>{/if}
        {/each}
        <path d="M1498 10h9l-4.500 5z" />
      </svg>
      <span class="corner">{@render icon('zoom', 10)}</span>

      <svg class="ruler side" aria-hidden="true">
        <path d="M15.500 3V807" stroke="#000" />
        {#each sideTicks as tick}
          <path d="M15 {tick.pos}h-{tick.size}" stroke="#000" />
          {#each tick.label.split('') as digit, i}
            <text x="3" y={tick.pos + 8 + i * 8}>{digit}</text>
          {/each}
        {/each}
        <path d="M11 485v9l5-4.500z" />
      </svg>
      <svg class="canvas" role="img" aria-label="Drawing">
        <path d="M1484.500 86V774.500M109 773.500H1486" stroke="#666" stroke-width="3" />
        <rect x="107.500" y="84.500" width="1376" height="688" fill="#fff" stroke="#666" />
        <g fill="none" stroke="#000">
          {#each heavyParts as d}<path {d} stroke-width="1.700" />{/each}
          {#each parts as d}<path {d} stroke-width="1.400" />{/each}
          {#each slots as [x, y, w]}<rect {x} {y} width={w} height="9.500" stroke-width="1.400" />{/each}
        </g>
      </svg>
      <div class="vbar">
        <button aria-label="Scroll up">{@render chevron('up')}</button>
        <span class="track"><span class="thumb canvas-v"><i class="grip"></i></span></span>
        <button aria-label="Scroll down">{@render chevron('down')}</button>
      </div>

      <span></span>
      <div class="hbar">
        <button aria-label="Scroll left">{@render chevron('left')}</button>
        <span class="track"><span class="thumb canvas-h"><i class="grip"></i></span></span>
        <button aria-label="Scroll right">{@render chevron('right')}</button>
      </div>
      <span class="corner">{@render icon('colorManage', 12)}</span>
    </div>

    <aside>
      <div class="dock">
        {@render dockTitle('objProps', 'Object Properties (Shift+Ctrl+O)')}
        <section class="properties">
          <div class="form">
            <label for="id">{@render mnemonic('_ID:')}</label><input id="id" disabled />
            <label for="label">{@render mnemonic('_Label:')}</label><input id="label" disabled />
            <label for="title">{@render mnemonic('_Title:')}</label><input id="title" disabled />
            <label for="rendering">{@render mnemonic('_Image Rendering:')}</label>
            {@render combo('rendering', 'Image Rendering', '', 'wide', true)}
          </div>
          <label class="desc-label" for="description">{@render mnemonic('_Description:')}</label>
          <textarea id="description" disabled></textarea>
          <div class="checks">
            <label><input type="checkbox" bind:checked={hide} disabled /><span>{@render mnemonic('_Hide')}</span></label>
            <label><input type="checkbox" bind:checked={lockObject} disabled /><span>{@render mnemonic('L_ock')}</span></label>
            <button class="set" disabled>{@render mnemonic('_Set')}</button>
          </div>
          <button class="expander">
            <svg width="9" height="9" viewBox="0 0 9 9" aria-hidden="true"><path d="M.5.5h8v8h-8z" fill="#fff" stroke="#888" /><path d="M2 4.500h5M4.500 2v5" stroke="#333" /></svg>
            <span>{@render mnemonic('_Interactivity')}</span>
          </button>
        </section>

        <div class="stack">
          {#each dialogs as dialog, i}
            <button class:current={i === 4}>
              {@render icon(dialog.icon, 14)}
              <span>{dialog.title}</span>
              <svg width="8" height="5" viewBox="0 0 8 5" aria-hidden="true"><path d="M4 0l4 4h-8z" fill="currentColor" /></svg>
            </button>
          {/each}
        </div>

        {@render dockTitle('fillStroke', 'Fill and Stroke (Shift+Ctrl+F)')}
        <section class="stroke">
          <div class="tabs">
            <button>{@render icon('solid', 10)}<span>{@render mnemonic('_Fill')}</span></button>
            <button>{@render icon('outline', 10)}<span>Stroke paint</span></button>
            <button class="active">{@render icon('strokeLines', 11)}<span>{@render mnemonic('Stroke st_yle')}</span></button>
          </div>
          <div class="stroke-form">
            <label for="width">{@render mnemonic('_Width:')}</label>
            <div class="line">{@render spin('width', '0.000', 'w68')}{@render combo('wunit', 'Width unit', 'in', 'w52', true)}</div>
            <label for="dashes">Dashes:</label>
            <div class="line dashes">
              <span class="preview">{@render combo('dashes', 'Dashes', '', 'w105', true)}<i></i></span>
              {@render spin('offset', '0.00', 'w50')}
            </div>
            <label for="start">Markers:</label>
            <div class="line markers">
              {#each ['start', 'middle', 'end'] as id}
                <span class="preview">{@render combo(id, `${id} marker`, '', 'w64', true)}<i></i></span>
              {/each}
            </div>
            {#each Object.entries(strokeButtons) as [name, arts]}
              <span class="name">{name}:</span>
              <div class="line art">
                {#each arts as art, i}
                  <button disabled aria-label="{name} {i + 1}">
                    <svg width="32" height="32" viewBox="0 0 32 32" aria-hidden="true">{@html art}</svg>
                  </button>
                {/each}
                {#if name === 'Join'}{@render spin('miter', '4.00', 'w56')}{/if}
              </div>
            {/each}
          </div>
        </section>
      </div>
      <div class="vbar">
        <button aria-label="Scroll dock up">{@render chevron('up')}</button>
        <span class="track"><span class="thumb dock-v"><i class="grip"></i></span></span>
        <button aria-label="Scroll dock down">{@render chevron('down')}</button>
      </div>
    </aside>
  </main>

  <div class="palette">
    <div class="swatches">
      <button class="none" aria-label="No color"><svg width="14" height="14" viewBox="0 0 14 14"><path d="M0 0l14 14M14 0l-14 14" stroke="#7a1a1a" stroke-width="1.500" /></svg></button>
      {#each swatches as color}
        <button style:background="#{color}" aria-label="#{color}"></button>
      {/each}
    </div>
    <svg width="6" height="8" viewBox="0 0 6 8" aria-hidden="true"><path d="M5 0v8l-4-4z" /></svg>
  </div>
  <div class="hbar palette-bar">
    <button aria-label="Palette left">{@render chevron('left')}</button>
    <span class="track"><span class="thumb palette-h"><i class="grip"></i></span></span>
    <button aria-label="Palette right">{@render chevron('right')}</button>
  </div>

  <footer>
    <dl class="style">
      <dt>Fill:</dt><dd>N/A</dd>
      <dt>Stroke:</dt><dd>N/A</dd>
    </dl>
    <div class="opacity"><label for="opacity">O:</label>{@render spin('opacity', '0', 'w48')}</div>
    <button class="small" aria-label="Toggle layer visibility">{@render icon('eye', 10)}</button>
    <button class="small" aria-label="Toggle layer lock">{@render icon('unlock', 11)}</button>
    <span class="layer">{@render combo('layer', 'Current layer', '▪Layer 1', 'w69', false)}</span>
    <p><b>Alt:</b> click to select under; scroll mouse-wheel to cycle-select; drag to move selected or select by touch</p>
    <dl class="coords">
      <dt>X:</dt><dd>97.34</dd>
      <dt>Y:</dt><dd>19.75</dd>
    </dl>
    <label for="zoom">Z:</label>
    <span class="spin zoom">
      <input id="zoom" bind:value={zoom} />
      <span class="steps">
        <button aria-label="Zoom in">{@render chevron('up', 7)}</button>
        <button aria-label="Zoom out">{@render chevron('down', 7)}</button>
      </span>
    </span>
  </footer>

  <div class="taskbar">
    <button class="start" aria-label="Start"><svg width="16" height="16" viewBox="0 0 16 16"><path d="M0 2.300l7-1v6.200h-7zM8 1.200l8-1.200v7.500h-8zM0 8.500h7v6.200l-7-1zM8 8.500h8v7.500l-8-1.200z" fill="#fff" /></svg></button>
    <div class="search">
      <svg width="22" height="22" viewBox="0 0 22 22" aria-hidden="true"><circle cx="11" cy="11" r="9" fill="none" stroke="#f4f0ec" stroke-width="2.500" /></svg>
      <input aria-label="Search" placeholder="Type here to search" />
      <svg width="12" height="18" viewBox="0 0 12 18" aria-hidden="true"><rect x="3.500" y="1" width="5" height="9" fill="none" stroke="#cbbdb0" /><path d="M4 6h4v4h-4z" fill="#cbbdb0" /><path d="M1 8v4h10v-4M6 12v4M3 16.500h6" fill="none" stroke="#cbbdb0" stroke-width="1.200" /></svg>
    </div>
    <div class="apps">
      {#each apps as app}
        <button class:open={app.open} class:active={app.active} aria-label={app.name}>
          <svg width="24" height="24" viewBox="0 0 24 24" aria-hidden="true">{@html app.art}</svg>
          {#if app.badge}<span class="badge">{app.badge}</span>{/if}
        </button>
      {/each}
    </div>
    <div class="tray">
      <button class="help" aria-label="Help"><svg width="24" height="24" viewBox="0 0 24 24"><circle cx="11" cy="11" r="10" fill="#1296db" stroke="#fff" stroke-width="2" /><path d="M7.500 8.500c0-4 7-4 7 0 0 2.500-3.500 2.500-3.500 5M11 15.500v2" fill="none" stroke="#fff" stroke-width="2.300" /><circle cx="19" cy="17" r="5" fill="#1296db" /><path d="M19 15.500v4M19 13.500v1" stroke="#fff" stroke-width="1.500" /></svg></button>
      <button class="people" aria-label="People"><svg width="16" height="16" viewBox="0 0 16 16" fill="none" stroke="#fff" stroke-width="1.200"><circle cx="11" cy="3.500" r="2.500" /><circle cx="5" cy="7.500" r="2.500" /><path d="M1 15c0-6 8-6 8 0M9 8c3-3 6-1 6 3" /></svg></button>
      <button class="more" aria-label="Show hidden icons"><svg width="14" height="14" viewBox="0 0 14 14"><path d="M1.500 9.500l5.500-5.500 5.500 5.500" fill="none" stroke="#fff" stroke-width="1.500" /></svg></button>
      <button class="battery" aria-label="Battery"><svg width="15" height="10" viewBox="0 0 15 10"><rect x=".5" y=".5" width="12" height="8" fill="none" stroke="#fff" /><path d="M2 2h5v5h-5z" fill="#fff" /><path d="M13.500 3v3" stroke="#fff" stroke-width="2" /></svg></button>
      <button class="dark wifi" aria-label="Network"><svg width="14" height="14" viewBox="0 0 14 14" fill="none" stroke="#e8dfd8" stroke-width="1.200"><path d="M1 13a12 12 0 0 1 12-12M4 13a9 9 0 0 1 9-9M7 13a6 6 0 0 1 6-6" /><circle cx="11.500" cy="11.500" r="1.500" fill="#fff" /></svg></button>
      <button class="dark volume" aria-label="Volume"><svg width="17" height="14" viewBox="0 0 17 14" fill="none" stroke="#fff"><path d="M1 5h2.500l3-3v10l-3-3h-2.500zM8.500 5q1.500 2 0 4" /><path d="M10.500 3.500q3 3.500 0 7M13 2q4 5 0 10" stroke="#9c8878" /></svg></button>
      <button class="dark clock"><span>1:26 AM</span><span>5/16/2018</span></button>
      <button class="dark action" aria-label="Notifications"><svg width="17" height="17" viewBox="0 0 17 17"><path d="M.5 1h16v12h-9l-3 3.500v-3.500h-4z" fill="#fff" /><path d="M3 4h11M3 7h11M3 10h7" stroke="#3f1d02" /></svg><span class="count">2</span></button>
    </div>
  </div>
</div>

<style>
  :global(body) {
    margin: 0;
    background: #efefef;
  }

  .screen {
    display: flex;
    flex-direction: column;
    height: 100vh;
    background: #efefef;
    color: #000;
    font: 11px/14px 'Open Sans', 'Noto Sans', sans-serif;
  }

  .defs {
    position: absolute;
  }

  svg {
    display: block;
    flex: none;
  }

  button,
  input,
  select,
  textarea {
    box-sizing: border-box;
    margin: 0;
    padding: 0;
    border: 0;
    border-radius: 0;
    background: none;
    color: inherit;
    font: inherit;
  }

  u {
    text-underline-offset: 2px;
  }

  h1,
  h2,
  p,
  dl,
  dd {
    margin: 0;
    font: inherit;
  }

  .titlebar {
    display: flex;
    align-items: center;
    gap: 6px;
    height: 23px;
    padding-left: 2px;
    background: #e19249;
  }

  .titlebar h1 {
    flex: 1;
  }

  .window-buttons {
    display: flex;
    align-self: flex-start;
    padding-right: 1px;
  }

  .window-buttons button {
    display: grid;
    place-items: center;
    width: 47px;
    height: 22px;
    border: 1px solid #4c3320;
    border-width: 0 0 1px 1px;
  }

  .window-buttons .close {
    background: #c4574e;
    border-right-width: 1px;
  }

  .menubar {
    display: flex;
    align-items: center;
    gap: 14px;
    height: 21px;
    padding: 0 0 2px 8px;
  }

  .toolbar {
    display: flex;
    align-items: center;
    height: 26px;
    padding-left: 2px;
  }

  .toolbar.commands {
    height: 34px;
  }

  .toolbar.controls {
    height: 28px;
  }

  .tb {
    display: grid;
    place-items: center;
    width: 26px;
    height: 26px;
  }

  .controls > .tb {
    height: 28px;
  }

  .pressed {
    background: #bfd9fd;
    border: 1px solid #2c638f;
  }

  .sep {
    flex: none;
    width: 1px;
    height: 17px;
    margin: 0 6px 0 5px;
    background: #a0a0a0;
  }

  .fields {
    display: flex;
    align-items: center;
    color: #6d6d6d;
  }

  .fields label {
    width: 21px;
    text-align: center;
  }

  .fields label:first-child {
    margin-left: 1px;
  }

  .fields label[for='w'] {
    width: 27px;
  }

  .fields label[for='h'] {
    width: 22px;
  }

  .spin {
    display: flex;
    height: 21px;
    color: #6d6d6d;
  }

  .spin input {
    flex: 1;
    min-width: 0;
    padding-left: 4px;
    border: 1px solid #abadb3;
    background: #efefef;
    box-shadow: inset 0 0 0 1px #fff;
    color: inherit;
  }

  .steps {
    display: flex;
    flex-direction: column;
    width: 12px;
  }

  .steps button {
    display: grid;
    place-items: center;
    flex: 1;
    min-height: 0;
    border: 1px solid #bbb;
    border-left: 0;
    color: #888;
  }

  .w44 { width: 44px; }
  .w48 { width: 48px; }
  .w50 { width: 50px; }
  .w52 { width: 52px; }
  .w56 { width: 56px; }
  .w64 { width: 64px; }
  .w68 { width: 68px; }
  .w69 { width: 69px; }
  .w105 { width: 105px; }

  .combo {
    display: flex;
    box-sizing: border-box;
    height: 20px;
    border: 1px solid #abadb3;
    background: #fff;
  }

  .combo select {
    flex: 1;
    min-width: 0;
    padding-left: 3px;
    appearance: none;
    opacity: 1;
  }

  .drop {
    display: grid;
    place-items: center;
    box-sizing: border-box;
    width: 17px;
    border: 1px solid #606060;
    background: #fff;
    color: #444;
  }

  .combo.off {
    background: #efefef;
    color: #6d6d6d;
  }

  .off .drop {
    border-color: #abadb3;
    color: #aaa;
  }

  .chev.down { transform: rotate(180deg); }
  .chev.left { transform: rotate(-90deg); }
  .chev.right { transform: rotate(90deg); }

  main {
    display: flex;
    flex: 1;
    min-height: 0;
    padding-top: 2px;
  }

  .toolbox {
    display: flex;
    flex-direction: column;
    width: 34px;
    padding: 2px 0 0 2px;
    box-sizing: border-box;
  }

  .toolbox button {
    display: grid;
    place-items: center;
    width: 30px;
    height: 30px;
  }

  .editor {
    display: grid;
    flex: 1;
    grid-template-columns: 16px minmax(0, 1fr) 17px;
    grid-template-rows: 15px minmax(0, 1fr) 17px;
    min-width: 0;
    padding-right: 5px;
  }

  .corner {
    display: grid;
    place-items: center;
  }

  .ruler,
  .canvas {
    width: 100%;
    height: 100%;
    overflow: hidden;
  }

  .canvas {
    background: #fff;
  }

  .ruler text {
    fill: #3c4460;
    font-size: 9px;
  }

  .ruler.side text {
    font-size: 8px;
  }

  .vbar,
  .hbar {
    display: flex;
    box-sizing: border-box;
    border: 1px solid #bbb;
    background: #fff;
  }

  .vbar {
    flex-direction: column;
    width: 17px;
  }

  .vbar button,
  .hbar button {
    display: grid;
    place-items: center;
    width: 15px;
    height: 15px;
    color: #555;
  }

  .vbar button:first-child { border-bottom: 1px solid #bbb; }
  .vbar button:last-child { border-top: 1px solid #bbb; }
  .hbar button:first-child { border-right: 1px solid #bbb; }
  .hbar button:last-child { border-left: 1px solid #bbb; }

  .track {
    display: flex;
    flex: 1;
    min-height: 0;
  }

  .vbar .track {
    flex-direction: column;
  }

  .thumb {
    display: grid;
    place-items: center;
    box-sizing: border-box;
    border: 1px solid #a0a0a0;
    border-width: 0 1px;
    background: #dcdcdc;
  }

  .vbar .thumb {
    border-width: 1px 0;
  }

  .canvas-v {
    height: 284px;
    margin-top: 238px;
  }

  .dock-v {
    height: 88%;
  }

  .canvas-h {
    width: 524px;
    margin-left: 464px;
  }

  .palette-h {
    width: 591px;
  }

  .grip {
    width: 7px;
    height: 8px;
    background: repeating-linear-gradient(90deg, #606060 0 2px, transparent 2px 3px);
  }

  .vbar .grip {
    width: 7px;
    height: 8px;
    background: repeating-linear-gradient(#606060 0 2px, transparent 2px 3px);
  }

  aside {
    display: flex;
    gap: 1px;
    width: 336px;
    padding-right: 1px;
    box-sizing: border-box;
    border-left: 1px solid #a0a0a0;
  }

  .dock {
    display: flex;
    flex: 1;
    flex-direction: column;
    min-width: 0;
    padding-right: 3px;
    border: 1px solid #000;
    border-width: 2px 0 0 1px;
  }

  .dock-title {
    display: flex;
    flex: none;
    align-items: center;
    height: 22px;
  }

  .dock-title h2 {
    flex: 1;
  }

  .dock-title button {
    margin-right: 5px;
  }

  .dock-title button + button {
    margin-left: 6px;
  }

  .properties {
    display: flex;
    flex: 1;
    flex-direction: column;
    min-height: 0;
    padding: 8px 8px 7px 10px;
    border-top: 1px solid #a0a0a0;
    color: #6d6d6d;
  }

  .form {
    display: grid;
    grid-template-columns: 91px 1fr;
    gap: 4px;
    align-items: center;
  }

  .form label {
    text-align: right;
    white-space: nowrap;
  }

  .form input {
    height: 23px;
    border: 1px solid #abadb3;
    box-shadow: inset 0 0 0 1px #fff;
  }

  .desc-label {
    margin: 6px 0 4px;
  }

  textarea {
    flex: 1;
    margin-right: 2px;
    border: 1px solid #a0a0a0;
    border-right-color: #fff;
    border-bottom-color: #fff;
    resize: none;
  }

  .checks {
    display: flex;
    align-items: center;
    margin-top: 11px;
  }

  .checks label {
    display: flex;
    align-items: center;
    gap: 6px;
    width: 98px;
  }

  .checks input {
    width: 13px;
    height: 13px;
    border: 1px solid #bbb;
    background: #fff;
    appearance: none;
  }

  .set {
    flex: 1;
    height: 23px;
    border: 1px solid #abadb3;
    background: #f4f4f4;
  }

  .expander {
    display: flex;
    align-items: center;
    gap: 5px;
    margin-top: 7px;
  }

  .stack {
    display: flex;
    flex-direction: column;
    gap: 4px;
    padding: 4px 0 8px 3px;
  }

  .stack button {
    display: flex;
    align-items: center;
    gap: 3px;
    height: 19px;
    padding: 0 6px 0 1px;
    border: 1px solid #6d6d6d;
    background: #dcdcdc;
    text-align: left;
  }

  .stack span {
    flex: 1;
  }

  .stack button > svg:last-child {
    color: #555;
  }

  .stack .current {
    border-color: #2c638f;
    background: #c0e4f6;
  }

  .stack .current > svg:last-child {
    color: #000;
  }

  .stroke {
    padding: 5px 5px 2px 4px;
    border-top: 1px solid #a0a0a0;
  }

  .tabs {
    display: flex;
    align-items: flex-end;
    padding-left: 2px;
  }

  .tabs button {
    display: flex;
    align-items: center;
    gap: 5px;
    height: 22px;
    padding: 0 4px 0 2px;
    border: 1px solid #8c8e9a;
    border-width: 1px 0 0 1px;
  }

  .tabs .active {
    position: relative;
    z-index: 1;
    height: 25px;
    margin-bottom: -1px;
    padding: 0 7px 0 4px;
    border-right-width: 1px;
    background: #fff;
  }

  .stroke-form {
    display: grid;
    grid-template-columns: 88px 1fr;
    row-gap: 4px;
    column-gap: 4px;
    align-items: center;
    padding: 8px 0 5px;
    border: 1px solid #8c8e9a;
    border-width: 1px 0 0 1px;
    background: #fff;
    color: #6d6d6d;
    text-align: right;
  }

  .line {
    display: flex;
    align-items: center;
    gap: 4px;
  }

  .line .spin,
  .line .combo {
    height: 23px;
  }

  .line.dashes {
    gap: 1px;
  }

  .preview {
    display: grid;
    align-items: center;
  }

  .preview > :global(*) {
    grid-area: 1 / 1;
  }

  .preview i {
    width: 80px;
    height: 2px;
    margin-left: 4px;
    background: #333;
  }

  .markers i {
    width: 14px;
    margin-left: 2px;
    background: #666;
  }

  .line.markers .combo {
    height: 26px;
  }

  .line.art {
    gap: 6px;
    padding-left: 1px;
  }

  .stroke-form .name,
  .line.art {
    margin-top: 2px;
  }

  .markers,
  label[for='start'] {
    margin-bottom: 3px;
  }

  .art > button {
    display: grid;
    place-items: center;
    width: 32px;
    height: 32px;
    border: 1px solid #abadb3;
    background: #f4f4f4;
  }

  .palette {
    display: flex;
    height: 19px;
  }

  .swatches {
    display: flex;
    flex: 1;
    height: 14px;
    padding-left: 2px;
    border-top: 2px solid #000;
    overflow: hidden;
  }

  .swatches button {
    flex: none;
    width: 14px;
    height: 14px;
  }

  .swatches .none {
    background: #fff;
  }

  .palette > svg {
    margin: 1px 3px 0 2px;
  }

  .palette-bar {
    height: 16px;
    margin-right: 9px;
  }

  .palette-bar button {
    height: 14px;
  }

  footer {
    display: flex;
    align-items: center;
    height: 28px;
  }

  dl {
    display: grid;
    grid-template-columns: 70px 1fr;
  }

  .style {
    width: 124px;
    padding-left: 2px;
  }

  .opacity {
    display: flex;
    align-items: center;
    gap: 3px;
    height: 28px;
    padding-right: 2px;
    border-right: 1px solid #a0a0a0;
  }

  .small {
    display: grid;
    place-items: center;
    width: 20px;
  }

  .layer {
    font-size: 10px;
    font-weight: 700;
  }

  .layer .combo {
    height: 27px;
  }

  footer p {
    flex: 1;
    padding-left: 2px;
  }

  .coords {
    grid-template-columns: 26px 1fr;
    width: 69px;
    padding-left: 3px;
    border-left: 1px solid #a0a0a0;
  }

  .coords dd {
    font-family: 'Liberation Mono', monospace;
  }

  .spin.zoom {
    width: 56px;
    margin: 0 1px 0 2px;
    color: #000;
  }

  .zoom input {
    padding-left: 9px;
    background: #fff;
  }

  .zoom .steps button {
    color: #222;
  }

  .taskbar {
    display: flex;
    height: 40px;
    background: #5a4026;
    color: #fff;
  }

  .taskbar button {
    display: grid;
    place-items: center;
  }

  .start {
    width: 48px;
    background: #3f1d02;
  }

  .search {
    display: flex;
    align-items: center;
    gap: 10px;
    width: 344px;
    padding: 0 15px 0 8px;
    box-sizing: border-box;
    background: #704e33;
  }

  .search input {
    flex: 1;
    font-size: 14px;
  }

  .search input::placeholder {
    color: #c4b4a6;
  }

  .apps {
    display: flex;
    flex: 1;
    gap: 1px;
    padding-left: 2px;
  }

  .apps button {
    position: relative;
    width: 48px;
    border-bottom: 2px solid transparent;
  }

  .apps .open::after {
    content: '';
    position: absolute;
    right: 4px;
    bottom: -2px;
    left: 4px;
    height: 2px;
    background: #ffd0a3;
  }

  .apps .active {
    background: #985f29;
  }

  .apps .active::after {
    right: 0;
    left: 0;
  }

  .badge,
  .count {
    position: absolute;
    right: -1px;
    bottom: 2px;
    box-sizing: border-box;
    height: 20px;
    padding: 0 3px;
    border: 1px solid #b98a60;
    border-radius: 10px;
    background: #8a4a14;
    font-size: 12px;
    line-height: 18px;
  }

  .tray {
    display: flex;
  }

  .tray .help { width: 24px; }
  .tray .people { width: 62px; }
  .tray .more { width: 18px; }
  .tray .battery { width: 46px; }
  .tray .wifi { width: 24px; }
  .tray .volume { width: 30px; }

  .tray .dark {
    background: #3f1d02;
  }

  .tray .clock {
    align-content: center;
    width: 70px;
    line-height: 18px;
  }

  .tray .action {
    position: relative;
    width: 50px;
    padding: 0 16px 2px 0;
  }

  .count {
    right: 16px;
    bottom: 4px;
    width: 17px;
    height: 17px;
    line-height: 15px;
  }
</style>
